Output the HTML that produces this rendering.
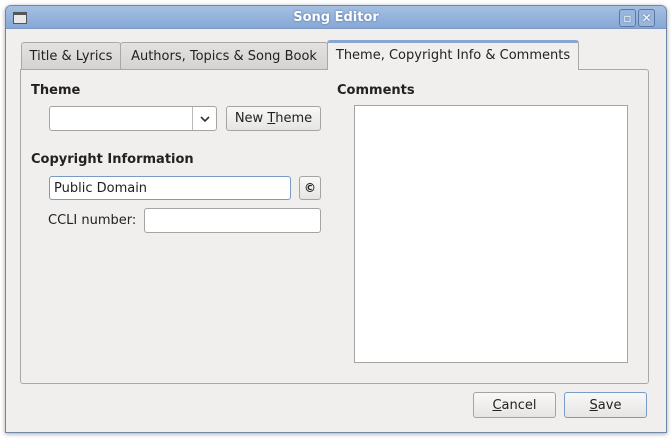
<!DOCTYPE html>
<html><head><style>
*{box-sizing:border-box;margin:0;padding:0}
body{width:672px;height:442px;background:#fff;font-family:"DejaVu Sans","Liberation Sans",sans-serif;font-size:13px;color:#222;position:relative;overflow:hidden}
.win{position:absolute;left:5px;top:5px;width:662px;height:428px;background:#f0efed;border:1px solid #6f86a8;border-radius:6px 6px 0 0;box-shadow:0 1px 5px rgba(0,0,0,.35)}
.title{position:absolute;left:0;top:0;width:660px;height:23px;background:linear-gradient(#a5c0e2,#86a8d6);border-radius:5px 5px 0 0;border-bottom:1px solid #7d98c0;color:#fff;font-weight:bold;text-align:center;line-height:24px;font-size:13px;text-shadow:0 0 2px #4a6a98}
.ico{position:absolute;left:7px;top:6px;width:14px;height:12px;border:1px solid #555;background:#e8e8e8;border-top:3px solid #555}
.tb{position:absolute;top:3px;width:17px;height:18px;border:1px solid #5b78a2;border-radius:3px;background:#9ab6dc;color:#fff;font-size:12px;line-height:16px;text-align:center}
.abs{position:absolute}
.tab{position:absolute;top:42px;height:28px;background:linear-gradient(#e3e2e0,#d4d3d1);border:1px solid #a9a8a5;border-bottom:none;border-radius:3px 3px 0 0;line-height:28px;text-align:center;font-size:13px}
.pane{position:absolute;left:20px;top:69px;width:629px;height:315px;border:1px solid #a9a8a5;border-radius:0 3px 3px 3px;background:#f0efed}
.lbl{position:absolute;font-weight:bold;font-size:13px}
.in{position:absolute;background:#fff;border:1px solid #a5a4a0;border-radius:3px}
.btn{position:absolute;border:1px solid #a5a4a0;border-radius:3px;background:linear-gradient(#f8f8f7,#e6e5e3);text-align:center;font-size:13px}
</style></head><body>
<div class="win">
<div class="title">Song Editor<div class="ico"></div>
<div class="tb" style="left:613px">▫</div><div class="tb" style="left:632px">✕</div></div>
</div>
<div class="tab" style="left:21px;width:100px">Title &amp; Lyrics</div>
<div class="tab" style="left:120px;width:208px">Authors, Topics &amp; Song Book</div>
<div class="pane"></div>
<div class="tab" style="left:327px;width:252px;top:40px;height:30px;background:#f0efed;border-top:3px solid #8aa6d0;line-height:26px">Theme, Copyright Info &amp; Comments</div>
<div class="lbl" style="left:31px;top:83px">Theme</div>
<div class="in" style="left:49px;top:106px;width:168px;height:25px"><div class="abs" style="left:142px;top:0;width:1px;height:23px;background:#bbb"></div>
<svg class="abs" style="left:150px;top:8px" width="10" height="8"><path d="M1 2 L5 6 L9 2" stroke="#333" stroke-width="1.6" fill="none"/></svg></div>
<div class="btn" style="left:226px;top:106px;width:95px;height:25px;line-height:24px">New <u>T</u>heme</div>
<div class="lbl" style="left:31px;top:152px">Copyright Information</div>
<div class="in" style="left:49px;top:176px;width:242px;height:24px;border-color:#7a9bc6;line-height:23px;padding-left:4px;font-size:13px">Public Domain</div>
<div class="btn" style="left:299px;top:176px;width:22px;height:24px;line-height:22px;font-weight:bold;font-size:12px">©</div>
<div class="abs" style="left:48px;top:213px;font-size:13px">CCLI number:</div>
<div class="in" style="left:144px;top:208px;width:177px;height:25px"></div>
<div class="lbl" style="left:337px;top:83px">Comments</div>
<div class="in" style="left:354px;top:105px;width:274px;height:258px;border-radius:0"></div>
<div class="btn" style="left:473px;top:392px;width:83px;height:26px;line-height:25px"><u>C</u>ancel</div>
<div class="btn" style="left:564px;top:392px;width:83px;height:26px;line-height:25px;border-color:#7a9bc6"><u>S</u>ave</div>
</body></html>
